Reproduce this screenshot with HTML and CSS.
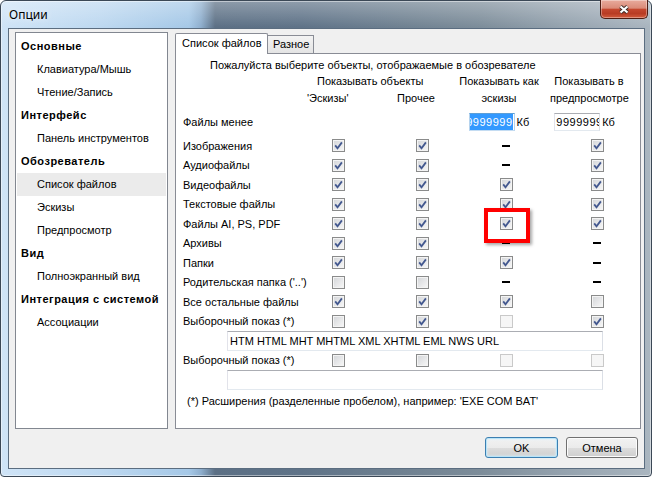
FILE: index.html
```html
<!DOCTYPE html>
<html lang="ru">
<head>
  <meta charset="UTF-8">
  <meta name="viewport" content="width=device-width, initial-scale=1.0">
  <title>Опции</title>
  <link rel="stylesheet" href="styles.css">
</head>
<body>
  <!-- shared check mark -->
  <svg class="defs">
    <symbol id="tick" viewBox="0 0 11 11">
      <path d="M2.2 5.4 L4.5 8.2 L8.9 2.4" fill="none" stroke="#43588f" stroke-width="1.8"/>
    </symbol>
  </svg>

  <div class="window">
    <div class="titlebar">
      <span class="title">Опции</span>
      <div class="close">
        <svg width="14" height="11" viewBox="0 0 14 11">
          <path d="M3.5 2.5 L10.5 8.5 M10.5 2.5 L3.5 8.5" stroke="#3a2b28" stroke-width="4"/>
          <path d="M3.5 2.5 L10.5 8.5 M10.5 2.5 L3.5 8.5" stroke="#fff" stroke-width="2.2"/>
        </svg>
      </div>
    </div>

    <div class="client">
      <div class="main">
        <!-- Categories -->
        <ul class="nav">
          <li class="group">Основные</li>
          <li>Клавиатура/Мышь</li>
          <li>Чтение/Запись</li>
          <li class="group">Интерфейс</li>
          <li>Панель инструментов</li>
          <li class="group">Обозреватель</li>
          <li class="sel">Список файлов</li>
          <li>Эскизы</li>
          <li>Предпросмотр</li>
          <li class="group">Вид</li>
          <li>Полноэкранный вид</li>
          <li class="group">Интеграция с системой</li>
          <li>Ассоциации</li>
        </ul>

        <!-- Tabs -->
        <div class="tabctl">
          <div class="tabs">
            <div class="tab active">Список файлов</div>
            <div class="tab">Разное</div>
          </div>

          <div class="page">
            <p class="intro">Пожалуйста выберите объекты, отображаемые в обозревателе</p>

            <div class="heads">
              <div class="h-objects">Показывать объекты</div>
              <div class="h-thumbs">'Эскизы'</div>
              <div class="h-other">Прочее</div>
              <div class="h-as">Показывать как<br>эскизы</div>
              <div class="h-preview">Показывать в<br>предпросмотре</div>
            </div>

            <div class="size-row">
              <span class="size-label">Файлы менее</span>
              <div class="field focus"><span class="sel-text">9999999</span></div>
              <span class="unit">Кб</span>
              <div class="field"><span>9999999</span></div>
              <span class="unit">Кб</span>
            </div>

            <div class="grid">
              <span>Изображения</span>
              <span class="cb"><svg><use href="#tick"/></svg></span>
              <span class="cb"><svg><use href="#tick"/></svg></span>
              <span class="dash"></span>
              <span class="cb"><svg><use href="#tick"/></svg></span>

              <span>Аудиофайлы</span>
              <span class="cb"><svg><use href="#tick"/></svg></span>
              <span class="cb"><svg><use href="#tick"/></svg></span>
              <span class="dash"></span>
              <span class="cb"><svg><use href="#tick"/></svg></span>

              <span>Видеофайлы</span>
              <span class="cb"><svg><use href="#tick"/></svg></span>
              <span class="cb"><svg><use href="#tick"/></svg></span>
              <span class="cb"><svg><use href="#tick"/></svg></span>
              <span class="cb"><svg><use href="#tick"/></svg></span>

              <span>Текстовые файлы</span>
              <span class="cb"><svg><use href="#tick"/></svg></span>
              <span class="cb"><svg><use href="#tick"/></svg></span>
              <span class="cb"><svg><use href="#tick"/></svg></span>
              <span class="cb"><svg><use href="#tick"/></svg></span>

              <span>Файлы AI, PS, PDF</span>
              <span class="cb"><svg><use href="#tick"/></svg></span>
              <span class="cb"><svg><use href="#tick"/></svg></span>
              <span class="cb marked"><svg><use href="#tick"/></svg><span class="highlight"></span></span>
              <span class="cb"><svg><use href="#tick"/></svg></span>

              <span>Архивы</span>
              <span class="cb"><svg><use href="#tick"/></svg></span>
              <span class="cb"><svg><use href="#tick"/></svg></span>
              <span class="dash"></span>
              <span class="dash"></span>

              <span>Папки</span>
              <span class="cb"><svg><use href="#tick"/></svg></span>
              <span class="cb"><svg><use href="#tick"/></svg></span>
              <span class="cb"><svg><use href="#tick"/></svg></span>
              <span class="dash"></span>

              <span>Родительская папка ('..')</span>
              <span class="cb"></span>
              <span class="cb"></span>
              <span class="dash"></span>
              <span class="dash"></span>

              <span>Все остальные файлы</span>
              <span class="cb"><svg><use href="#tick"/></svg></span>
              <span class="cb"><svg><use href="#tick"/></svg></span>
              <span class="cb"><svg><use href="#tick"/></svg></span>
              <span class="cb"></span>

              <span>Выборочный показ (*)</span>
              <span class="cb"></span>
              <span class="cb"><svg><use href="#tick"/></svg></span>
              <span class="cb off"></span>
              <span class="cb"><svg><use href="#tick"/></svg></span>

              <div class="ext">HTM HTML MHT MHTML XML XHTML EML NWS URL</div>

              <span>Выборочный показ (*)</span>
              <span class="cb"></span>
              <span class="cb"></span>
              <span class="cb off"></span>
              <span class="cb off"></span>

              <div class="ext"></div>
            </div>

            <p class="note">(*) Расширения (разделенные пробелом), например: 'EXE COM BAT'</p>
          </div>
        </div>
      </div>

      <div class="buttons">
        <button class="btn default">OK</button>
        <button class="btn">Отмена</button>
      </div>
    </div>
  </div>
</body>
</html>
```

FILE: styles.css
```css
body {
  margin: 0;
  background: #fff;
  font-family: "Liberation Sans", Arial, sans-serif;
  font-size: 11px;
  color: #000;
}

.defs {
  display: none;
}

/* Window frame (Aero glass) */
.window {
  width: 652px;
  height: 477px;
  box-sizing: border-box;
  display: flex;
  flex-direction: column;
  padding: 0 6px 7px 7px;
  border: 1px solid #3b4856;
  border-radius: 6px 6px 4px 4px;
  background:
    linear-gradient(to bottom, rgba(255, 255, 255, 0.3), rgba(255, 255, 255, 0) 26px),
    linear-gradient(to right, #cfe4f7 0, #bdd8f0 100px, #a5c8e7 188px, #8eaecd 200px, #5c7085 214px,
      #5f7388 300px, #6f8191 400px, #7d8d9a 480px, #94a2ae 560px, #aab6c0 652px);
  box-shadow: inset 0 0 0 1px rgba(255, 255, 255, 0.45);
}

.titlebar {
  height: 27px;
  display: flex;
  justify-content: space-between;
  align-items: flex-start;
}

.title {
  margin: 6px 0 0 1px;
  font-family: "Noto Sans", "Open Sans", sans-serif;
  font-size: 12px;
  line-height: 16px;
  text-shadow: 0 0 6px rgba(255, 255, 255, 0.8);
}

.close {
  width: 48px;
  height: 19px;
  margin: -1px -3px 0 0;
  box-sizing: border-box;
  display: flex;
  align-items: center;
  justify-content: center;
  border: 1px solid #4e1d13;
  border-top: none;
  border-radius: 0 0 5px 5px;
  background: linear-gradient(#e8ab9d 0%, #db8b78 45%, #c4472e 52%, #b83c24 75%, #d35b3c 100%);
  box-shadow: inset 0 0 0 1px rgba(255, 255, 255, 0.35);
}

.close svg {
  display: block;
}

/* Client area */
.client {
  flex: 1;
  display: flex;
  flex-direction: column;
  box-sizing: border-box;
  border: 1px solid #5b6d80;
  background: #f0f0f0;
}

.main {
  display: flex;
  align-items: flex-start;
  padding: 3px 0 0 6px;
}

.nav {
  width: 153px;
  height: 397px;
  box-sizing: border-box;
  margin: 0;
  padding: 2px 1px;
  list-style: none;
  background: #fff;
  border: 1px solid #828790;
}

.nav li {
  height: 23px;
  line-height: 23px;
  padding-left: 20px;
  white-space: nowrap;
}

.nav li.group {
  padding-left: 4px;
  font-weight: bold;
  letter-spacing: 0.5px;
}

.nav li.sel {
  background: #ebebeb;
}

/* Tab control */
.tabctl {
  width: 466px;
  margin: 1px 0 0 7px;
}

.tabs {
  display: flex;
  align-items: flex-end;
}

.tab {
  box-sizing: border-box;
  border: 1px solid #898c95;
  border-bottom: none;
  white-space: nowrap;
}

.tab.active {
  position: relative;
  z-index: 1;
  width: 93px;
  height: 21px;
  margin-bottom: -1px;
  padding-left: 6px;
  line-height: 18px;
  background: #fff;
  border-radius: 2px 2px 0 0;
}

.tab:not(.active) {
  width: 46px;
  height: 18px;
  padding-left: 5px;
  line-height: 17px;
  border-left: none;
  background: linear-gradient(#f3f3f3, #e4e4e4);
}

.page {
  height: 376px;
  box-sizing: border-box;
  background: #fff;
  border: 1px solid #898c95;
}

.intro {
  margin: 0;
  padding: 3px 0 0 34px;
  line-height: 16px;
}

.heads {
  display: grid;
  grid-template-columns: 124px 90px 51px 98px 82px;
  grid-template-rows: 17px 17px;
  margin-left: 7px;
  line-height: 17px;
  white-space: nowrap;
}

.h-objects { grid-row: 1; grid-column: 2 / 4; padding-left: 10px; }
.h-thumbs { grid-row: 2; grid-column: 2; }
.h-other { grid-row: 2; grid-column: 3; }
.h-as { grid-row: 1 / 3; grid-column: 4; padding-left: 4px; text-align: center; }
.h-preview { grid-row: 1 / 3; grid-column: 5; padding-left: 4px; text-align: center; }

.size-row {
  display: flex;
  align-items: center;
  height: 29px;
  margin-left: 7px;
}

.size-label {
  width: 287px;
}

.field {
  display: flex;
  width: 46px;
  height: 18px;
  box-sizing: border-box;
  padding: 0 1px;
  overflow: hidden;
  white-space: nowrap;
  line-height: 16px;
  letter-spacing: 0.5px;
  background: #fff;
  border: 1px solid;
  border-color: #abadb3 #dbdfe6 #e3e9ef #e2e3ea;
}

.field span {
  flex: none;
}

.field.focus {
  justify-content: flex-end;
  border-color: #5c9fd8 #b5d3ee #c4dcf2 #b5d3ee;
}

.sel-text {
  background: #3399ff;
  color: #fff;
}

.unit {
  width: 40px;
  box-sizing: border-box;
  padding-left: 2px;
}

/* Check box table */
.grid {
  display: grid;
  grid-template-columns: 149px 84px 84px 91px 45px;
  grid-auto-rows: 19.5px;
  align-items: center;
  justify-items: start;
  margin-left: 7px;
  white-space: nowrap;
}

.cb {
  display: block;
  width: 13px;
  height: 13px;
  box-sizing: border-box;
  border: 1px solid #8a8b8b;
  background: linear-gradient(135deg, #d3d5d8, #f8f8f8);
  box-shadow: inset 0 0 0 1px #f4f4f4;
}

.cb svg {
  display: block;
  width: 11px;
  height: 11px;
}

.cb.off {
  border-color: #c9c9c9;
  background: #f6f6f6;
  box-shadow: none;
}

.cb.marked {
  position: relative;
}

.highlight {
  position: absolute;
  left: -17px;
  top: -10px;
  width: 46px;
  height: 35px;
  box-sizing: border-box;
  border: 4px solid #ff0000;
  box-shadow: 2px 2px 3px rgba(0, 0, 0, 0.35);
}

.dash {
  width: 8px;
  height: 2px;
  margin-left: 2px;
  background: #000;
}

.ext {
  grid-column: 1 / -1;
  width: 376px;
  height: 20px;
  box-sizing: border-box;
  margin-left: 44px;
  padding-left: 2px;
  line-height: 18px;
  background: #fff;
  border: 1px solid;
  border-color: #abadb3 #dbdfe6 #e3e9ef #e2e3ea;
}

.note {
  margin: 3.5px 0 0 11px;
  line-height: 16px;
}

/* Dialog buttons */
.buttons {
  display: flex;
  justify-content: flex-end;
  gap: 8px;
  padding: 8px 6px 0 0;
}

.btn {
  height: 21px;
  width: 72px;
  padding: 0;
  font-family: "Liberation Sans", Arial, sans-serif;
  font-size: 11px;
  color: #000;
  border: 1px solid #707070;
  border-radius: 3px;
  background: linear-gradient(#f2f2f2 0%, #ebebeb 50%, #dddddd 51%, #cfcfcf 100%);
  box-shadow: inset 0 0 0 1px #fcfcfc;
}

.btn.default {
  width: 73px;
  border-color: #3c7fb1;
  box-shadow: inset 0 0 0 1px #b9e4f8, inset 0 0 3px 1px #d7f0fb;
}
```
